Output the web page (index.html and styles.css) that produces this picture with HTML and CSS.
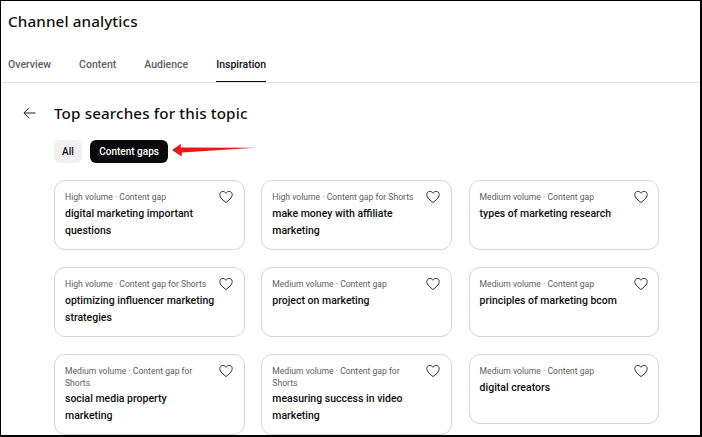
FILE: index.html
```html
<!DOCTYPE html>
<html lang="en">
<head>
<meta charset="utf-8">
<title>Channel analytics</title>
<link rel="stylesheet" href="styles.css">
</head>
<body>
<svg class="defs" width="0" height="0" aria-hidden="true"><symbol id="heart" viewBox="0 0 14 14"><path d="M7 12.6C4.6 10.5.8 7.9.8 4.6.8 2.7 2.2 1.4 3.9 1.4c1.3 0 2.4.7 3.1 1.9.7-1.2 1.8-1.9 3.1-1.9 1.7 0 3.1 1.3 3.1 3.2 0 3.3-3.8 5.9-6.2 8Z" fill="none" stroke="#303030" stroke-width="1"/></symbol></svg>
<main class="frame">
  <header class="top">
    <h1 class="app-title">Channel analytics</h1>
    <nav class="tabs">
      <span class="tab">Overview</span>
      <span class="tab">Content</span>
      <span class="tab">Audience</span>
      <span class="tab active">Inspiration</span>
    </nav>
  </header>
  <section class="body">
    <div class="heading">
      <svg class="back" viewBox="0 0 13 12" width="13" height="12"><path d="M12.5 6H1M6 .8 .9 6 6 11.2" fill="none" stroke="#222" stroke-width="1"/></svg>
      <h2 class="page-title">Top searches for this topic</h2>
    </div>
    <div class="chips">
      <span class="chip">All</span>
      <span class="chip selected">Content gaps</span>
      <svg class="arrow" viewBox="0 0 84 14" width="84" height="14"><path d="M0 7 9 .8 8.5 4.6 83 4.7 10 9.5 9.5 13.4Z" fill="#f01414"/></svg>
    </div>
    <div class="grid">
      <article class="card"><div class="card-head"><p class="meta">High volume · Content gap</p><svg class="heart"><use href="#heart"/></svg></div><p class="name">digital marketing important questions</p></article>
      <article class="card"><div class="card-head"><p class="meta">High volume · Content gap for Shorts</p><svg class="heart"><use href="#heart"/></svg></div><p class="name">make money with affiliate marketing</p></article>
      <article class="card"><div class="card-head"><p class="meta">Medium volume · Content gap</p><svg class="heart"><use href="#heart"/></svg></div><p class="name">types of marketing research</p></article>
      <article class="card"><div class="card-head"><p class="meta">High volume · Content gap for Shorts</p><svg class="heart"><use href="#heart"/></svg></div><p class="name">optimizing influencer marketing strategies</p></article>
      <article class="card"><div class="card-head"><p class="meta">Medium volume · Content gap</p><svg class="heart"><use href="#heart"/></svg></div><p class="name">project on marketing</p></article>
      <article class="card"><div class="card-head"><p class="meta">Medium volume · Content gap</p><svg class="heart"><use href="#heart"/></svg></div><p class="name">principles of marketing bcom</p></article>
      <article class="card"><div class="card-head"><p class="meta">Medium volume · Content gap for Shorts</p><svg class="heart"><use href="#heart"/></svg></div><p class="name">social media property marketing</p></article>
      <article class="card"><div class="card-head"><p class="meta">Medium volume · Content gap for Shorts</p><svg class="heart"><use href="#heart"/></svg></div><p class="name">measuring success in video marketing</p></article>
      <article class="card"><div class="card-head"><p class="meta">Medium volume · Content gap</p><svg class="heart"><use href="#heart"/></svg></div><p class="name">digital creators</p></article>
    </div>
  </section>
</main>
</body>
</html>
```
FILE: styles.css
```css
* { box-sizing: border-box; }
html, body { margin: 0; padding: 0; background: #fff; }
body { width: 702px; height: 437px; overflow: hidden; font-family: Roboto, "Liberation Sans", sans-serif; color: #0f0f0f; }
.defs { position: absolute; }
p, h1, h2 { margin: 0; }
.frame { width: 702px; height: 437px; border: solid #000; border-width: 1px 2px 2px 1px; overflow: hidden; }
.top { height: 82px; border-bottom: 1px solid #e5e5e5; padding: 10px 0 0 7px; }
.app-title { font: 500 15.2px/20px "Noto Sans", sans-serif; letter-spacing: .13px; }
.tabs { display: flex; gap: 28px; margin-top: 18px; }
.tab { height: 33px; padding-top: 9px; font-size: 10.5px; line-height: 13px; font-weight: 500; color: #606060; }
.tab.active { color: #0f0f0f; border-bottom: 1px solid #0f0f0f; }
.body { padding: 19px 0 0 22px; }
.heading { display: flex; align-items: center; gap: 18px; height: 22px; }
.back { flex: none; }
.page-title { font: 500 15.2px/22px "Noto Sans", sans-serif; letter-spacing: .13px; }
.chips { display: flex; align-items: center; gap: 8px; margin: 16px 0 0 31px; height: 23px; }
.chip { height: 23px; padding: 0 8px; border-radius: 6px; background: #f0f0f0; font-size: 10px; line-height: 23px; font-weight: 500; }
.chip.selected { background: #0a0a0a; color: #fff; padding: 0 9.5px; }
.arrow { margin: 0 0 3px -4px; }
.grid { display: grid; grid-template-columns: repeat(3, 190.5px); column-gap: 16.8px; row-gap: 17px; align-items: start; margin: 17px 0 0 31px; }
.card { min-height: 70px; border: 1px solid #d6d6d6; border-radius: 11px; padding: 10px 10.4px 10px 10px; }
.card-head { display: flex; justify-content: space-between; align-items: flex-start; gap: 8px; }
.meta { font-size: 8.6px; line-height: 12px; color: #606060; }
.heart { flex: none; width: 14px; height: 14px; margin-top: -1px; }
.name { margin-top: 1px; padding-right: 16.6px; font-size: 10.5px; line-height: 17px; font-weight: 500; }
```
